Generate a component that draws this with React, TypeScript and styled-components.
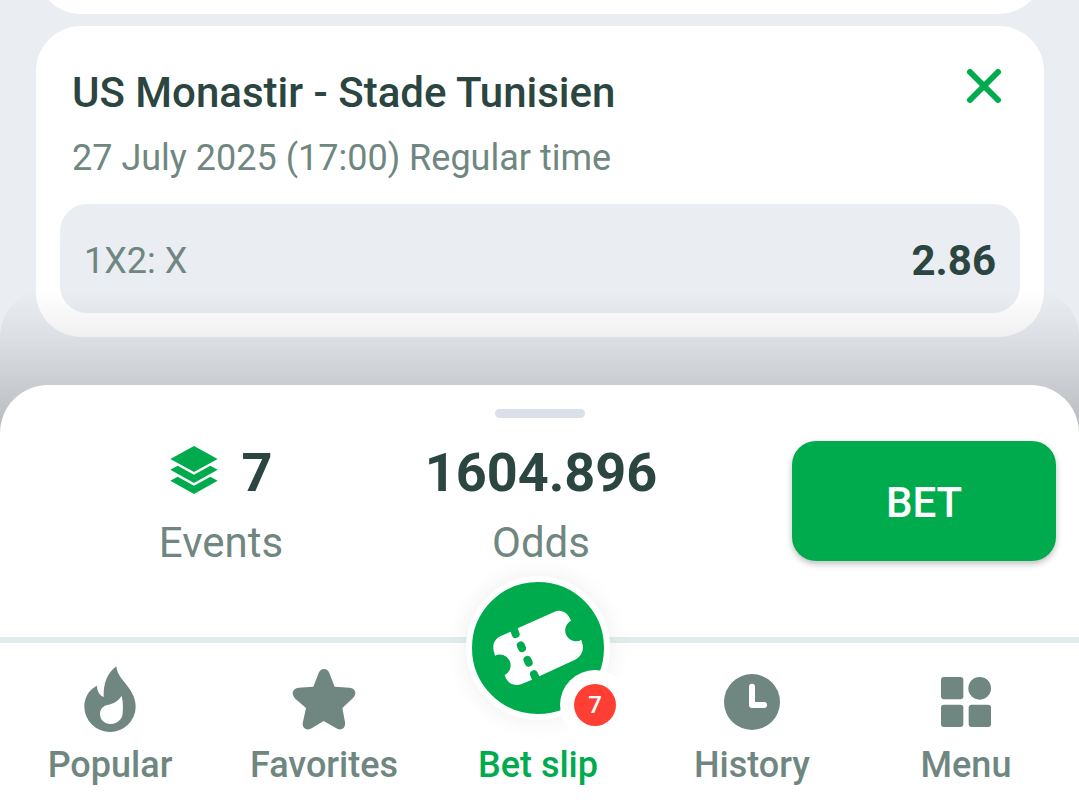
import React from "react";
import styled, { createGlobalStyle, ThemeProvider } from "styled-components";

const theme = {
  page: "#eaedf2",
  surface: "#ffffff",
  green: "#00ab4e",
  ink: "#2b4540",
  muted: "#6f8780",
  line: "#e3ecec",
  handle: "#dbdfe9",
  alert: "#ff3f34",
};

const GlobalStyle = createGlobalStyle`
  *, *::before, *::after { box-sizing: border-box; }
  body {
    margin: 0;
    background: ${theme.page};
    font-family: Roboto, "Liberation Sans", sans-serif;
    color: ${theme.ink};
  }
  button { font-family: inherit; border: 0; padding: 0; cursor: pointer; }
  h2, p { margin: 0; }
`;

const Screen = styled.div`
  display: flex;
  flex-direction: column;
  height: 100vh;
`;

const SlipList = styled.main`
  flex: 1;
  min-height: 0;
  display: flex;
  flex-direction: column;
  justify-content: flex-end;
  gap: 12px;
  padding: 0 35px 48px 36px;
  overflow: hidden;
`;

const Card = styled.article`
  flex: none;
  min-height: 240px;
  padding: 43px 24px 24px;
  border-radius: 45px;
  background: ${({ theme }) => theme.surface};
`;

const CardHeader = styled.header`
  display: flex;
  justify-content: space-between;
  align-items: flex-start;
  padding: 0 12px;
  margin-bottom: 25px;
`;

const Heading = styled.div`
  display: flex;
  flex-direction: column;
  gap: 20px;
`;

const MatchTitle = styled.h2`
  font-size: 42px;
  font-weight: 500;
  line-height: 48px;
`;

const MatchTime = styled.p`
  font-size: 36px;
  line-height: 42px;
  color: ${({ theme }) => theme.muted};
`;

const CloseButton = styled.button`
  width: 48px;
  height: 48px;
  margin-top: -7px;
  background: none;
  color: ${({ theme }) => theme.green};
  svg { display: block; }
`;

const Selection = styled.div`
  display: flex;
  justify-content: space-between;
  align-items: center;
  min-height: 109px;
  padding: 4px 24px 0;
  border-radius: 27px;
  background: ${({ theme }) => theme.page};
`;

const Market = styled.span`
  font-size: 36px;
  line-height: 42px;
  color: ${({ theme }) => theme.muted};
`;

const Price = styled.strong`
  font-size: 42px;
  font-weight: 700;
  line-height: 48px;
`;

const Footer = styled.div`
  position: relative;
  flex: none;
`;

const Shade = styled.div`
  position: absolute;
  inset: -96px 0 auto;
  height: 144px;
  border-radius: 48px 48px 0 0;
  background: linear-gradient(rgba(0, 0, 0, 0), rgba(0, 0, 0, 0.06) 33%, rgba(0, 0, 0, 0.22));
  pointer-events: none;
`;

const Sheet = styled.section`
  position: relative;
  padding: 24px 0 70px;
  border-radius: 48px 48px 0 0;
  background: ${({ theme }) => theme.surface};
`;

const Handle = styled.div`
  width: 90px;
  height: 9px;
  margin: 0 auto 23px;
  border-radius: 5px;
  background: ${({ theme }) => theme.handle};
`;

const Summary = styled.div`
  display: grid;
  grid-template-columns: 1fr 1fr 355px;
  padding: 0 23px 0 61px;
`;

const Stat = styled.div`
  display: flex;
  flex-direction: column;
  align-items: center;
  gap: 14px;
`;

const StatValue = styled.strong`
  display: flex;
  align-items: flex-start;
  gap: 24px;
  font-size: 54px;
  font-weight: 700;
  line-height: 64px;
  svg { margin-top: 5px; }
`;

const StatLabel = styled.span`
  font-size: 42px;
  line-height: 48px;
  color: ${({ theme }) => theme.muted};
`;

const BetButton = styled.button`
  justify-self: end;
  width: 264px;
  height: 120px;
  padding-top: 3px;
  border-radius: 24px;
  background: ${({ theme }) => theme.green};
  color: ${({ theme }) => theme.surface};
  font-size: 42px;
  font-weight: 500;
  box-shadow: 0 3px 6px rgba(0, 0, 0, 0.25);
`;

const NavBar = styled.nav`
  position: relative;
  display: grid;
  grid-template-columns: repeat(5, 1fr);
  padding: 23px 6px 25px 3px;
  border-top: 6px solid ${({ theme }) => theme.line};
  background: ${({ theme }) => theme.surface};
`;

const NavItem = styled.button<{ $active?: boolean }>`
  position: relative;
  display: flex;
  flex-direction: column;
  align-items: center;
  gap: 6px;
  background: none;
  color: ${({ theme, $active }) => ($active ? theme.green : theme.muted)};
  font-size: 36px;
  font-weight: 500;
  line-height: 42px;
`;

const IconSlot = styled.span`
  display: block;
  height: 72px;
  svg { display: block; }
`;

const SlipBubble = styled.span`
  position: absolute;
  top: -90px;
  left: 50%;
  margin-left: -72px;
  width: 144px;
  height: 144px;
  border: 6px solid ${({ theme }) => theme.surface};
  border-radius: 50%;
  background: ${({ theme }) => theme.green};
  box-shadow: 0 0 24px rgba(0, 0, 0, 0.07);
  svg { display: block; }
`;

const Badge = styled.span`
  position: absolute;
  right: -12px;
  bottom: -12px;
  width: 42px;
  height: 42px;
  border-radius: 50%;
  background: ${({ theme }) => theme.alert};
  box-shadow: 0 0 0 14px ${({ theme }) => theme.surface};
  color: ${({ theme }) => theme.surface};
  font-size: 24px;
  font-weight: 500;
  line-height: 42px;
  text-align: center;
`;

const CloseIcon = () => (
  <svg width="48" height="48" viewBox="0 0 48 48" aria-hidden="true">
    <path d="M10 10 38 38M38 10 10 38" stroke="currentColor" strokeWidth="6" strokeLinecap="round" />
  </svg>
);

const LayersIcon = () => (
  <svg width="48" height="48" viewBox="90 168 144 144" fill={theme.green} aria-hidden="true">
    <path d="M162 168 233 207 162 246 91 207Z" />
    <path d="M113 227 91 239 162 279 233 239 211 227 162 254Z" />
    <path d="M113 260 91 272 162 312 233 272 211 260 162 287Z" />
  </svg>
);

const FlameIcon = () => (
  <svg width="72" height="72" viewBox="102 78 216 216" fill="currentColor" aria-hidden="true">
    <path
      fillRule="evenodd"
      d="M229 79C231 105 250 121 265 142C280 163 287 180 287 200A77 76 0 0 1 133 200C133 172 146 150 171 137C171 152 178 166 191 171C190 130 201 100 229 79ZM245 167C250 190 249 205 248 220C247 240 230 252 212 252C193 252 180 239 180 222C180 205 190 197 205 194C222 190 236 182 245 167Z"
    />
  </svg>
);

const StarIcon = () => (
  <svg width="72" height="72" viewBox="744 78 216 216" fill="currentColor" aria-hidden="true">
    <path d="M820 140 836 99Q841 87 852 87Q863 87 868 99L884 140 929 143Q943 144 946 157Q947 166 940 173L907 204 915 246Q917 262 906 267Q897 270 889 265L851 243 815 265Q806 270 797 267Q787 262 788 250L798 204 764 175Q757 167 758 157Q761 145 776 143Z" />
  </svg>
);

const ClockIcon = () => (
  <svg width="72" height="72" viewBox="108 48 216 216" aria-hidden="true">
    <circle cx="216" cy="156" r="84" fill="currentColor" />
    <path d="M216 110V165H252" fill="none" stroke="#fff" strokeWidth="18" strokeLinecap="round" strokeLinejoin="round" />
  </svg>
);

const MenuIcon = () => (
  <svg width="72" height="72" viewBox="750 48 216 216" fill="currentColor" aria-hidden="true">
    <rect x="783" y="81" width="67" height="67" rx="9" />
    <circle cx="899" cy="115" r="34" />
    <rect x="783" y="164" width="67" height="67" rx="9" />
    <rect x="866" y="164" width="67" height="67" rx="9" />
  </svg>
);

const TicketIcon = () => (
  <svg width="132" height="132" viewBox="96 66 396 396" aria-hidden="true">
    <path
      fill="#fff"
      d="M233 205 344 155C364 147 384 158 393 182A29 29 0 0 0 424 240L428 255C431 275 422 290 405 299L298 349 293 338A11 11 0 0 0 271 347L276 359 243 373C221 380 200 368 194 345A29 29 0 0 0 165 287L161 272C157 253 164 238 181 229L212 215 216 227A11 11 0 0 0 238 218Z"
    />
    <g fill={theme.green}>
      <rect x="232" y="244" width="24" height="33" rx="12" transform="rotate(-24 244 260)" />
      <rect x="252" y="287" width="24" height="33" rx="12" transform="rotate(-24 264 303)" />
    </g>
  </svg>
);

export default function App() {
  return (
    <ThemeProvider theme={theme}>
      <GlobalStyle />
      <Screen>
        <SlipList>
          <Card aria-hidden="true" />
          <Card>
            <CardHeader>
              <Heading>
                <MatchTitle>US Monastir - Stade Tunisien</MatchTitle>
                <MatchTime>27 July 2025 (17:00) Regular time</MatchTime>
              </Heading>
              <CloseButton type="button" aria-label="Remove event">
                <CloseIcon />
              </CloseButton>
            </CardHeader>
            <Selection>
              <Market>1X2: X</Market>
              <Price>2.86</Price>
            </Selection>
          </Card>
        </SlipList>
        <Footer>
          <Shade />
          <Sheet>
            <Handle />
            <Summary>
              <Stat>
                <StatValue>
                  <LayersIcon />7
                </StatValue>
                <StatLabel>Events</StatLabel>
              </Stat>
              <Stat>
                <StatValue>1604.896</StatValue>
                <StatLabel>Odds</StatLabel>
              </Stat>
              <BetButton type="button">BET</BetButton>
            </Summary>
          </Sheet>
          <NavBar>
            <NavItem type="button">
              <IconSlot><FlameIcon /></IconSlot>
              Popular
            </NavItem>
            <NavItem type="button">
              <IconSlot><StarIcon /></IconSlot>
              Favorites
            </NavItem>
            <NavItem type="button" $active aria-current="page">
              <IconSlot>
                <SlipBubble>
                  <TicketIcon />
                  <Badge>7</Badge>
                </SlipBubble>
              </IconSlot>
              Bet slip
            </NavItem>
            <NavItem type="button">
              <IconSlot><ClockIcon /></IconSlot>
              History
            </NavItem>
            <NavItem type="button">
              <IconSlot><MenuIcon /></IconSlot>
              Menu
            </NavItem>
          </NavBar>
        </Footer>
      </Screen>
    </ThemeProvider>
  );
}
